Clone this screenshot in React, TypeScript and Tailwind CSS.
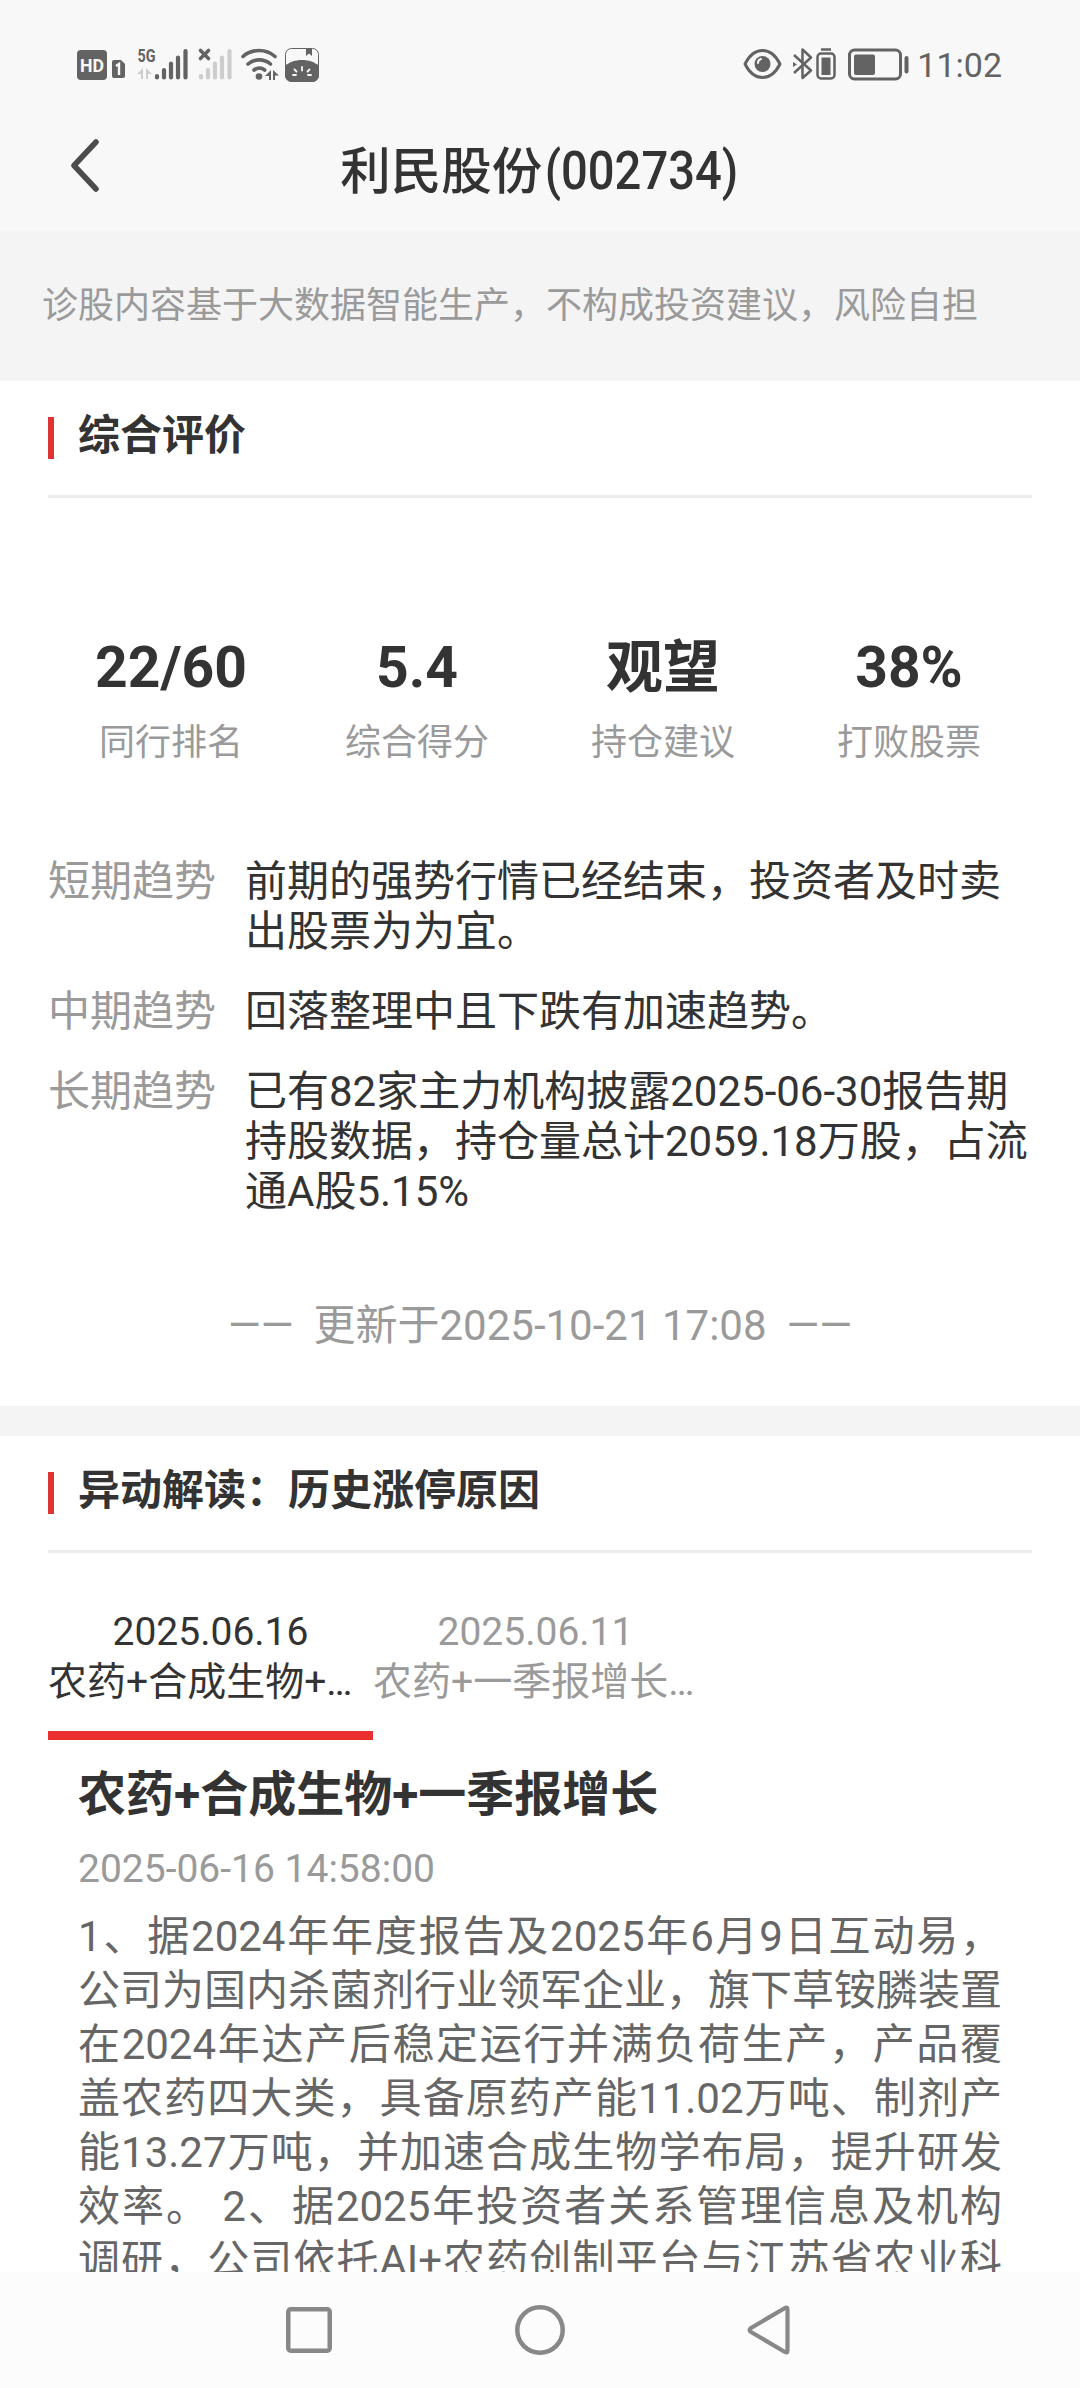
import React from "react";

interface Stat {
  value: string;
  label: string;
}

interface Trend {
  label: string;
  lines: string[];
}

interface ReasonTab {
  date: string;
  title: string;
  active: boolean;
}

const stats: Stat[] = [
  { value: "22/60", label: "同行排名" },
  { value: "5.4", label: "综合得分" },
  { value: "观望", label: "持仓建议" },
  { value: "38%", label: "打败股票" },
];

const trends: Trend[] = [
  { label: "短期趋势", lines: ["前期的强势行情已经结束，投资者及时卖", "出股票为为宜。"] },
  { label: "中期趋势", lines: ["回落整理中且下跌有加速趋势。"] },
  {
    label: "长期趋势",
    lines: [
      "已有82家主力机构披露2025-06-30报告期",
      "持股数据，持仓量总计2059.18万股，占流",
      "通A股5.15%",
    ],
  },
];

const tabs: ReasonTab[] = [
  { date: "2025.06.16", title: "农药+合成生物+…", active: true },
  { date: "2025.06.11", title: "农药+一季报增长…", active: false },
];

const bodyLines = [
  "1、据2024年年度报告及2025年6月9日互动易，",
  "公司为国内杀菌剂行业领军企业，旗下草铵膦装置",
  "在2024年达产后稳定运行并满负荷生产，产品覆",
  "盖农药四大类，具备原药产能11.02万吨、制剂产",
  "能13.27万吨，并加速合成生物学布局，提升研发",
  "效率。 2、据2025年投资者关系管理信息及机构",
  "调研，公司依托AI+农药创制平台与江苏省农业科",
];

const StatusBar: React.FC = () => (
  <div className="flex h-[128px] items-start justify-between pl-[76px] pr-[78px] pt-[45px] text-[#636363]">
    <svg width="246" height="40" viewBox="0 0 246 40" fill="currentColor">
      <rect x="1" y="5" width="30" height="30" rx="4" />
      <text x="16" y="27" textAnchor="middle" fontSize="19" fontWeight="700" fill="#f8f8f8" fontFamily="Roboto, sans-serif" textLength="24" lengthAdjust="spacingAndGlyphs">HD</text>
      <path d="M38 15h7l4 4v12a2 2 0 0 1-2 2h-9a2 2 0 0 1-2-2V17a2 2 0 0 1 2-2z" />
      <path d="M40 21l3-2v11" fill="none" stroke="#f8f8f8" strokeWidth="2.4" />
      <text x="61.500" y="17" fontSize="18" fontWeight="700" fontFamily="Roboto, sans-serif" textLength="18" lengthAdjust="spacingAndGlyphs">5G</text>
      <path d="M67 23v11h-2v-5h-4zM70 23l6 6h-4v5h-2z" fill="#cdcdcd" />
      <g stroke="currentColor" strokeWidth="4.200" strokeLinecap="round">
        <path d="M81 31v1.500M88 25v7.500M95 18.500v14M102 12.500v20M109.500 6v26.500" />
      </g>
      <g stroke="#cdcdcd" strokeWidth="4.200" strokeLinecap="round">
        <path d="M125 31v1.500M132 25v7.500M139 18.500v14M146 12.500v20M153.500 6v26.500" />
      </g>
      <path d="M124.500 5.500l8 8M132.500 5.500l-8 8" stroke="currentColor" strokeWidth="3.600" strokeLinecap="round" />
      <g fill="none" stroke="currentColor" strokeWidth="3.600" strokeLinecap="round">
        <path d="M167 11.500c9-8 23-8 32 0M172 19c6.500-5.500 16-5.500 22.500 0M178 25c3.200-2.600 7.500-2.600 10.700 0" />
      </g>
      <circle cx="183" cy="31.500" r="3.300" />
      <path d="M195 25v10h-2v-4h-4zM197 25l6 5.500h-4V35h-2z" />
      <rect x="209.500" y="3.500" width="33" height="33" rx="6" fill="none" stroke="currentColor" />
      <path d="M230 4h6v7l-3-2.500-3 2.500z" />
      <path d="M209 21c8-8 26-8 34 0v9a7 7 0 0 1-7 7h-20a7 7 0 0 1-7-7z" />
      <path d="M217 30h3M218.500 24.500l2 2M226 22v3.500M233.500 24.500l-2 2M232 30h3" stroke="#f8f8f8" strokeWidth="1.800" strokeLinecap="round" />
    </svg>

    <div className="flex items-start">
      <svg width="176" height="40" viewBox="0 0 176 40" fill="none" stroke="currentColor">
        <path d="M8 19C17 1 34 1 43 19C34 37 17 37 8 19z" strokeWidth="3" strokeLinejoin="round" />
        <circle cx="25.500" cy="19" r="8" fill="currentColor" stroke="none" />
        <path d="M21 18a4 4 0 0 1 3-4" stroke="#f8f8f8" strokeWidth="2" strokeLinecap="round" />
        <path d="M57 10l17 15.500-8.500 7.500V4.500l8.500 8L57 28" strokeWidth="2.500" strokeLinejoin="round" />
        <path d="M56 17l4 2.500-4 2.500z" fill="currentColor" stroke="none" />
        <rect x="80.500" y="8.500" width="17" height="25" rx="3.500" strokeWidth="2.500" />
        <path d="M84 4.500h10" strokeWidth="2.500" />
        <rect x="84.500" y="12.500" width="9" height="17.500" fill="currentColor" stroke="none" />
        <rect x="112.500" y="5" width="51" height="29" rx="5" strokeWidth="3" />
        <rect x="117" y="9.500" width="21" height="20.500" rx="2" fill="currentColor" stroke="none" />
        <path d="M169.500 13v13.500" strokeWidth="4" strokeLinecap="round" />
      </svg>
      <span className="pl-[4px] text-[34px] leading-[40px]">11:02</span>
    </div>
  </div>
);

const SectionTitle: React.FC<{ children: React.ReactNode }> = ({ children }) => (
  <div className="mx-[48px] flex h-[117px] items-start border-b-[3px] border-[#ececec] pt-[30px]">
    <span className="mt-[6px] h-[42px] w-[6px] bg-[#e03434]" />
    <h2 className="ml-[24px] text-[42px] font-bold leading-[50px]">{children}</h2>
  </div>
);

const Overview: React.FC = () => (
  <section className="h-[1025px] shrink-0 bg-white">
    <SectionTitle>综合评价</SectionTitle>

    <div className="mx-[48px] grid grid-cols-4 pt-[133px] text-center">
      {stats.map((s) => (
        <div key={s.label}>
          <div className="h-[74px] text-[57px] font-bold leading-[74px]">{s.value}</div>
          <div className="mt-[13px] text-[36px] leading-[50px] text-[#9a9a9a]">{s.label}</div>
        </div>
      ))}
    </div>

    <div className="mx-[48px] mt-[89px] flex flex-col gap-[30px] text-[42px] leading-[50px]">
      {trends.map((t) => (
        <div key={t.label} className="flex">
          <span className="w-[197px] shrink-0 text-[#9a9a9a]">{t.label}</span>
          <p className="whitespace-nowrap">
            {t.lines.map((line) => (
              <span key={line} className="block">
                {line}
              </span>
            ))}
          </p>
        </div>
      ))}
    </div>

    <div className="mt-[84px] flex items-center justify-center gap-[20px] text-[42px] leading-[50px] text-[#9a9a9a]">
      <span>——</span>
      <span>更新于2025-10-21 17:08</span>
      <span>——</span>
    </div>
  </section>
);

const LimitUpReason: React.FC = () => (
  <section className="min-h-0 flex-1 overflow-hidden bg-white">
    <SectionTitle>异动解读：历史涨停原因</SectionTitle>

    <div className="mx-[48px] flex pt-[54px] text-[39px] leading-[50px]">
      {tabs.map((tab) => (
        <div
          key={tab.date}
          className={`h-[133px] w-[325px] whitespace-nowrap border-b-[9px] ${
            tab.active ? "border-[#ea302f]" : "border-transparent text-[#9a9a9a]"
          }`}
        >
          <div className="text-center">{tab.date}</div>
          <div>{tab.title}</div>
        </div>
      ))}
    </div>

    <article className="px-[78px]">
      <h3 className="pt-[26px] text-[48px] font-bold leading-[58px]">农药+合成生物+一季报增长</h3>
      <time className="mt-[20px] block text-[39px] leading-[50px] text-[#9a9a9a]">2025-06-16 14:58:00</time>
      <div className="mt-[16px] text-[42px] leading-[54px] text-[#666]">
        {bodyLines.map((line) => (
          <p key={line} className="whitespace-nowrap [text-align-last:justify]">
            {line}
          </p>
        ))}
      </div>
    </article>
  </section>
);

const NavBar: React.FC = () => (
  <nav className="flex h-[116px] shrink-0 justify-center bg-[#fcfcfc] pt-[30px]">
    <svg width="508" height="56" viewBox="0 0 508 56" fill="none" stroke="#888" strokeWidth="4.500">
      <rect x="2.250" y="7.250" width="41.500" height="41.500" rx="2.500" />
      <circle cx="254" cy="28" r="22.700" />
      <path d="M501.500 7.500q0-3-2.500-1.500L465 26q-3 2 0 4L499 50q2.500 1.500 2.500-1.500z" strokeWidth="4.200" strokeLinejoin="round" />
    </svg>
  </nav>
);

const App: React.FC = () => (
  <div className="flex h-[2388px] w-[1080px] flex-col overflow-hidden bg-[#f4f4f4] font-[Roboto,'Noto_Sans_CJK_SC',sans-serif] text-[#333]">
    <header className="h-[231px] shrink-0 bg-[#f8f8f8]">
      <StatusBar />
      <div className="flex h-[82px] items-center">
        <svg className="ml-[67px] shrink-0" width="36" height="60" viewBox="0 0 36 60" fill="none">
          <path d="M29 3L7 26.500L29 50" stroke="#4c4c4c" strokeWidth="5.500" strokeLinecap="round" strokeLinejoin="round" />
        </svg>
        <h1 className="mr-[103px] flex flex-1 items-baseline justify-center whitespace-nowrap pt-[4px] text-[50.5px] font-medium leading-[70px]">
          利民股份
          <span className="-mr-[23px] inline-block origin-left scale-x-[0.89] pl-[3px] text-[53px]">(002734)</span>
        </h1>
      </div>
    </header>

    <p className="h-[150px] shrink-0 pl-[42px] pt-[50px] text-[36px] leading-[50px] text-[#9a9a9a]">
      诊股内容基于大数据智能生产，不构成投资建议，风险自担
    </p>

    <Overview />
    <div className="h-[30px] shrink-0" />
    <LimitUpReason />
    <NavBar />
  </div>
);

export default App;
